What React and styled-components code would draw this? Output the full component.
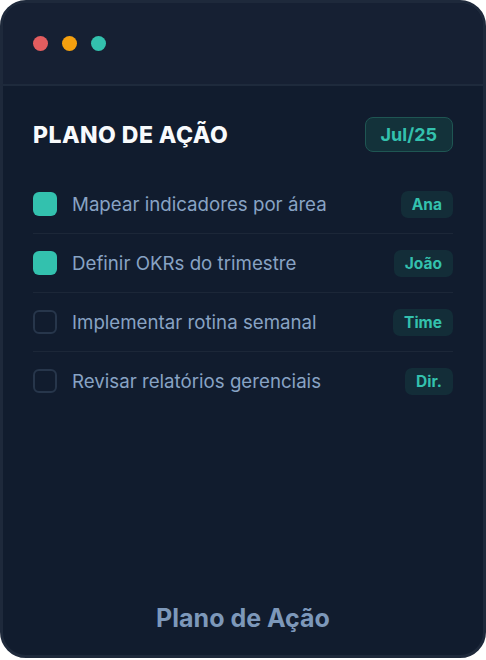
import React from 'react'
import styled, { createGlobalStyle } from 'styled-components'

const GlobalStyle = createGlobalStyle`
  html, body {
    margin: 0;
    padding: 0;
    background: #ffffff;
  }
  body {
    font-family: Inter, "Noto Sans", sans-serif;
  }
`

const tasks = [
  { text: 'Mapear indicadores por área', owner: 'Ana', done: true },
  { text: 'Definir OKRs do trimestre', owner: 'João', done: true },
  { text: 'Implementar rotina semanal', owner: 'Time', done: false },
  { text: 'Revisar relatórios gerenciais', owner: 'Dir.', done: false },
]

function App() {
  return (
    <>
      <GlobalStyle />
      <Card>
        <TitleBar>
          <Dot color="#e35d5f" />
          <Dot color="#f5a00f" />
          <Dot color="#33c1ae" />
        </TitleBar>
        <Body>
          <Heading>
            <Title>PLANO DE AÇÃO</Title>
            <MonthBadge>Jul/25</MonthBadge>
          </Heading>
          <List>
            {tasks.map(task => (
              <Row key={task.text}>
                <Check done={task.done} />
                <TaskText>{task.text}</TaskText>
                <Owner>{task.owner}</Owner>
              </Row>
            ))}
          </List>
          <Footer>Plano de Ação</Footer>
        </Body>
      </Card>
    </>
  )
}

export default App

const Card = styled.div`
    width: 486px;
    height: 658px;
    box-sizing: border-box;
    border: 3px solid #1e293b;
    border-radius: 26px;
    background: #111c2e;
    overflow: hidden;
    display: flex;
    flex-direction: column;
`

const TitleBar = styled.div`
    height: 83px;
    flex-shrink: 0;
    box-sizing: border-box;
    background: #162033;
    border-bottom: 2px solid #1e2a3c;
    display: flex;
    align-items: center;
    gap: 14px;
    padding: 0 0 1px 30px;
`

const Dot = styled.span`
    width: 15px;
    height: 15px;
    border-radius: 50%;
    background: ${props => props.color};
`

const Body = styled.div`
    flex: 1;
    display: flex;
    flex-direction: column;
    padding: 31px 30px 22px 30px;
`

const Heading = styled.div`
    display: flex;
    justify-content: space-between;
    align-items: center;
    height: 35px;
`

const Title = styled.h1`
    margin: 0;
    font-size: 23px;
    font-weight: 800;
    color: #f8fafc;
    letter-spacing: 0.45px;
`

const MonthBadge = styled.div`
    height: 35px;
    box-sizing: border-box;
    padding: 0 15px;
    display: flex;
    align-items: center;
    border: 1px solid #1f5653;
    border-radius: 8px;
    background: #13323a;
    color: #33c1ae;
    font-size: 18px;
    font-weight: 700;
`

const List = styled.div`
    margin-top: 23px;
    display: flex;
    flex-direction: column;
`

const Row = styled.div`
    height: 58px;
    display: flex;
    align-items: center;
    gap: 15px;
    border-bottom: 1px solid #1c2738;
    &:last-child {
        border-bottom: none;
    }
`

const Check = styled.span`
    width: 24px;
    height: 24px;
    box-sizing: border-box;
    border-radius: 6px;
    flex-shrink: 0;
    background: ${props => props.done ? '#33c1ae' : 'transparent'};
    border: ${props => props.done ? 'none' : '2px solid #27364b'};
`

const TaskText = styled.span`
    flex: 1;
    font-size: 18.7px;
    color: #88a3c4;
`

const Owner = styled.span`
    height: 27px;
    box-sizing: border-box;
    padding: 0 11px;
    display: flex;
    align-items: center;
    border-radius: 7px;
    background: #132d38;
    color: #33c1ae;
    font-size: 15.5px;
    font-weight: 700;
`

const Footer = styled.div`
    margin-top: auto;
    text-align: center;
    font-size: 25px;
    font-weight: 700;
    color: #7d98ba;
`
